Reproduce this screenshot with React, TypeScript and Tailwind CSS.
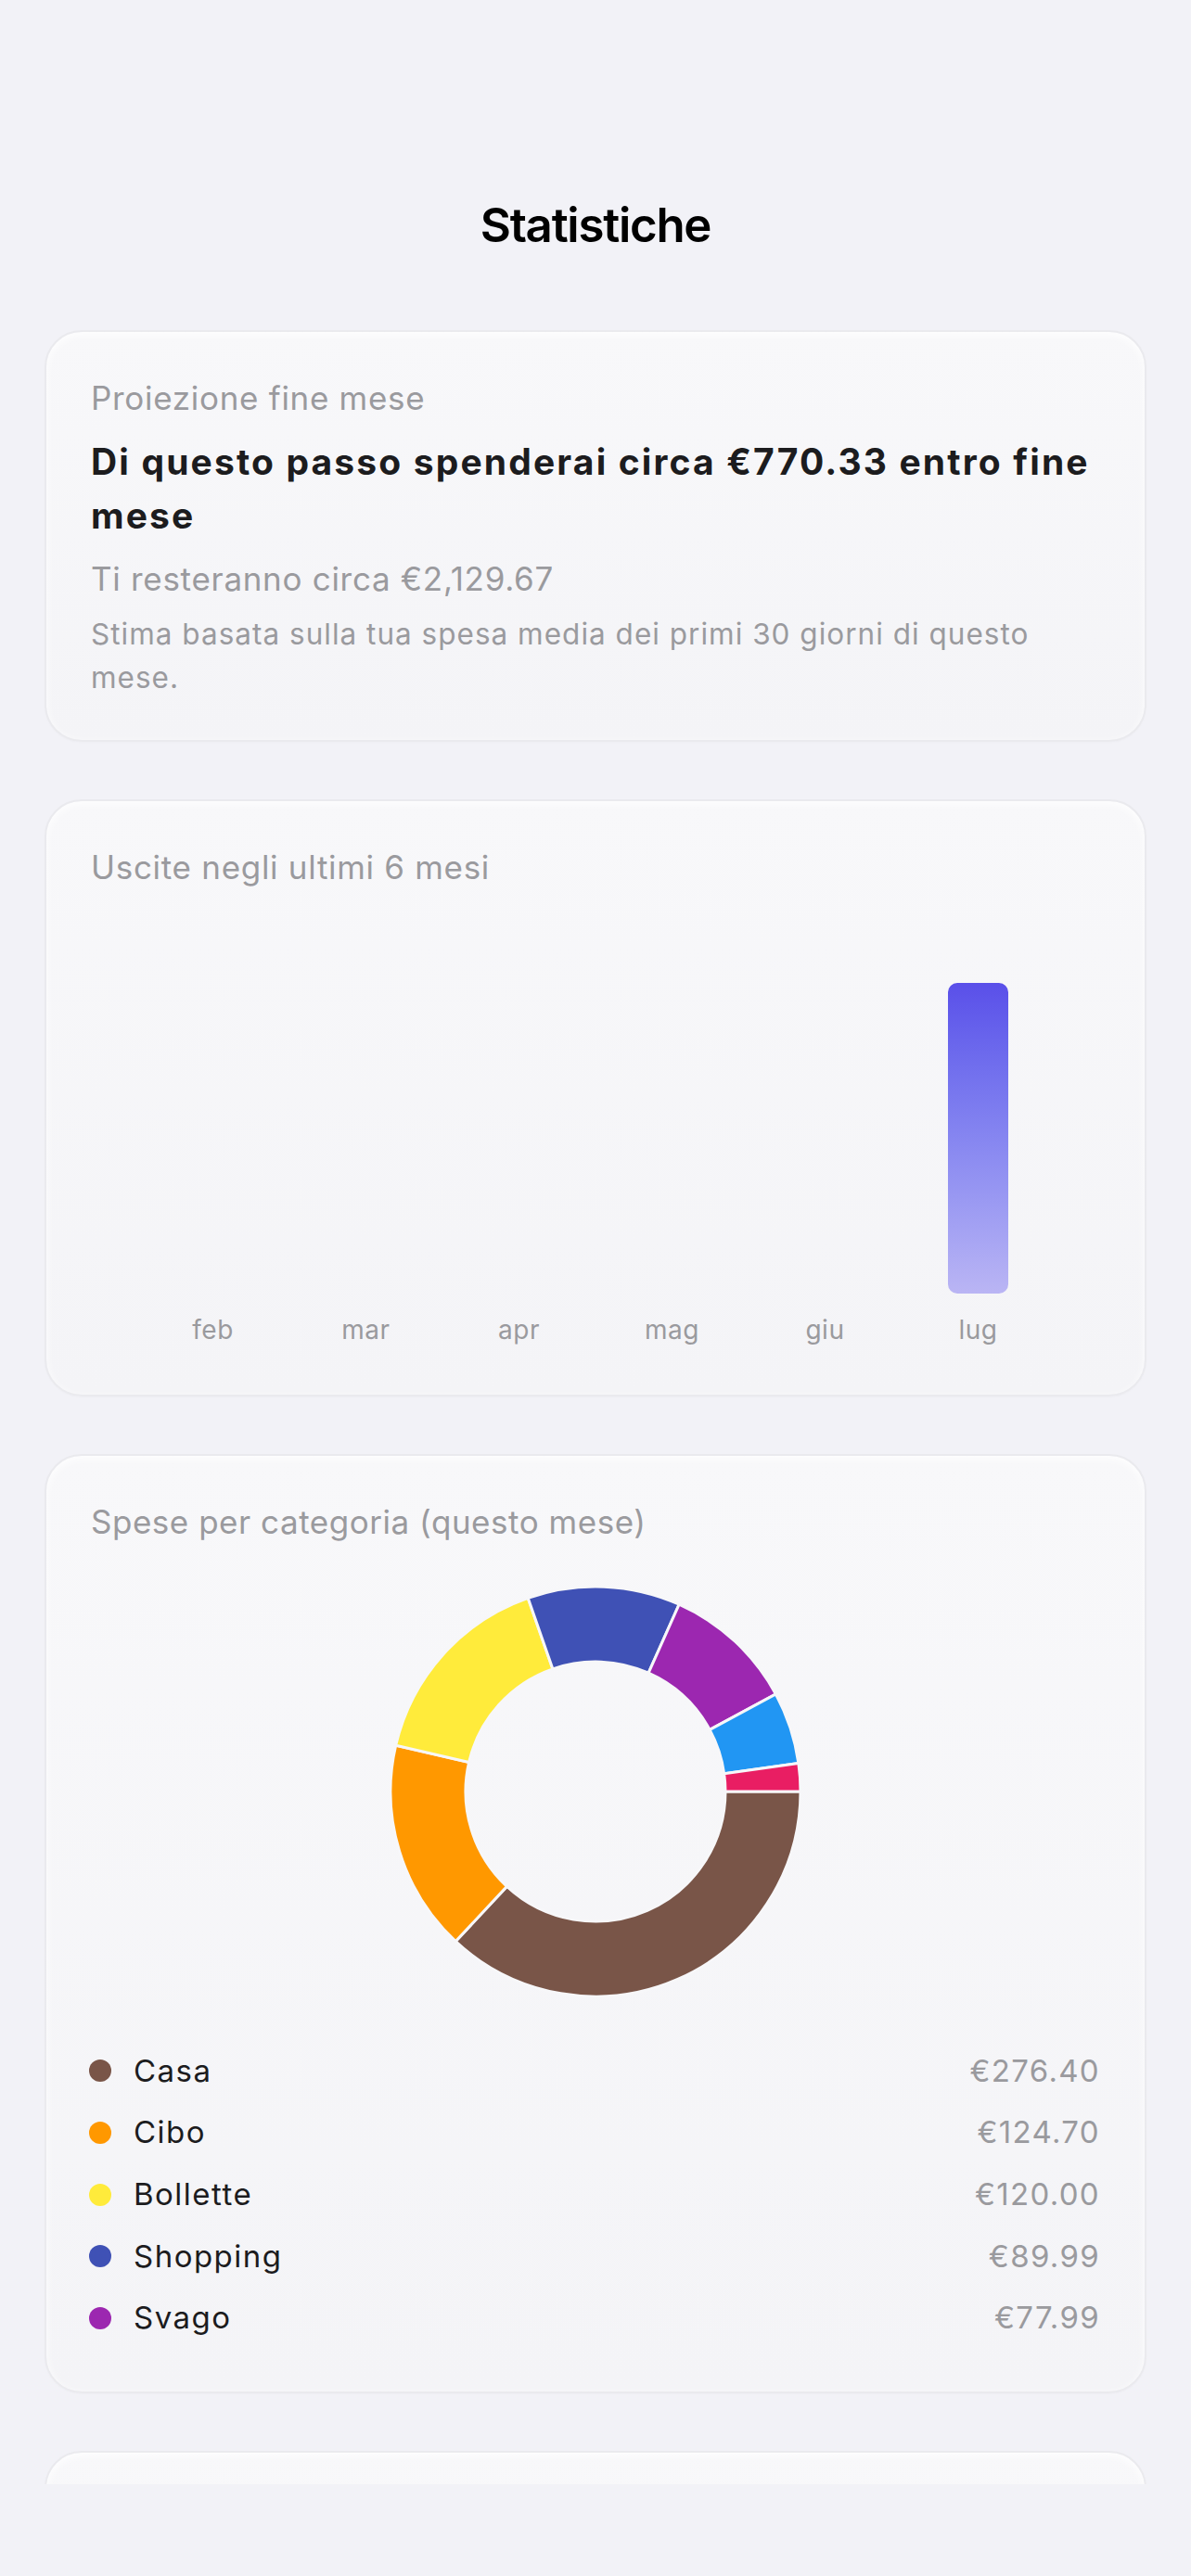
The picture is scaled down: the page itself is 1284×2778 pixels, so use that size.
import React from "react";

const segments = [
  { name: "Casa", value: 276.4, color: "#795548" },
  { name: "Cibo", value: 124.7, color: "#FF9800" },
  { name: "Bollette", value: 120.0, color: "#FFEB3B" },
  { name: "Shopping", value: 89.99, color: "#3F51B5" },
  { name: "Svago", value: 77.99, color: "#9C27B0" },
  { name: "Trasporti", value: 42.5, color: "#2196F3" },
  { name: "Salute", value: 16.5, color: "#E91E63" },
];

function arcPath(cx: number, cy: number, r0: number, r1: number, a0: number, a1: number) {
  const rad = (d: number) => (d * Math.PI) / 180;
  const p = (r: number, a: number) => [cx + r * Math.cos(rad(a)), cy + r * Math.sin(rad(a))];
  const large = a1 - a0 > 180 ? 1 : 0;
  const [x0, y0] = p(r1, a0);
  const [x1, y1] = p(r1, a1);
  const [x2, y2] = p(r0, a1);
  const [x3, y3] = p(r0, a0);
  return `M${x0} ${y0} A${r1} ${r1} 0 ${large} 1 ${x1} ${y1} L${x2} ${y2} A${r0} ${r0} 0 ${large} 0 ${x3} ${y3} Z`;
}

function Donut() {
  const total = segments.reduce((s, x) => s + x.value, 0);
  let acc = 0;
  return (
    <svg width="444" height="444" viewBox="0 0 444 444">
      {segments.map((s) => {
        const a0 = (acc / total) * 360;
        acc += s.value;
        const a1 = (acc / total) * 360;
        return (
          <path
            key={s.name}
            d={arcPath(222, 222, 140, 221, a0, a1)}
            fill={s.color}
            stroke="#f7f7f9"
            strokeWidth={3}
            strokeLinejoin="miter"
          />
        );
      })}
    </svg>
  );
}

function Card({ children, className = "" }: { children?: React.ReactNode; className?: string }) {
  return (
    <div
      className={
        "rounded-[40px] border-2 border-[#eaeaee] bg-gradient-to-b from-[#f8f8fa] to-[#f4f4f7] px-[48px] shadow-[inset_0_3px_10px_rgba(255,255,255,0.9),0_1px_2px_rgba(0,0,0,0.02)] " +
        className
      }
    >
      {children}
    </div>
  );
}

const months = ["feb", "mar", "apr", "mag", "giu", "lug"];

const legend = segments.slice(0, 5);

export default function App() {
  return (
    <div className="min-h-[2778px] bg-[#f2f2f7] font-['Inter','Noto_Sans',sans-serif] text-[#1c1c1e]">
      <div className="h-[2679px] overflow-hidden">
        <h1 className="pt-[212px] text-center text-[51px] font-semibold leading-[62px] tracking-[-0.025em] text-black">
          Statistiche
        </h1>

        <div className="mt-[82px] flex flex-col gap-[62px] px-[48px]">
          {/* Card 1 */}
          <Card className="pt-[50px] pb-[44px]">
            <div className="text-[35px] leading-[42px] tracking-[0.02em] text-[#9a9a9e]">Proiezione fine mese</div>
            <div className="mt-[19px] text-[39px] font-bold leading-[58px] tracking-[0.055em] text-[#1c1c1e]">
              Di questo passo spenderai circa €770.33 entro fine mese
            </div>
            <div className="mt-[18px] text-[35px] leading-[42px] tracking-[0.02em] text-[#9a9a9e]">
              Ti resteranno circa €2,129.67
            </div>
            <div className="mt-[15px] text-[31.5px] leading-[47px] tracking-[0.032em] text-[#9a9a9e]">
              Stima basata sulla tua spesa media dei primi 30 giorni di questo mese.
            </div>
          </Card>

          {/* Card 2 */}
          <Card className="pt-[50px] pb-[53px]">
            <div className="text-[35px] leading-[42px] tracking-[0.02em] text-[#9a9a9e]">Uscite negli ultimi 6 mesi</div>
            <div className="mt-[104px] grid h-[335px] grid-cols-6 px-[49px]">
              {months.map((m, i) => (
                <div key={m} className="flex items-end justify-center">
                  {i === 5 && (
                    <div className="h-full w-[65px] rounded-[10px] bg-gradient-to-b from-[#5a4fe9] to-[#bab5f4]" />
                  )}
                </div>
              ))}
            </div>
            <div className="mt-[22px] grid grid-cols-6 px-[49px]">
              {months.map((m) => (
                <div key={m} className="text-center text-[28px] leading-[34px] tracking-[0.02em] text-[#9a9a9e]">
                  {m}
                </div>
              ))}
            </div>
          </Card>

          {/* Card 3 */}
          <Card className="pt-[50px] pb-[46px]">
            <div className="text-[35px] leading-[42px] tracking-[0.015em] text-[#9a9a9e]">
              Spese per categoria (questo mese)
            </div>
            <div className="mt-[48px] flex justify-center">
              <Donut />
            </div>
            <div className="mt-[46px] flex flex-col">
              {legend.map((s) => (
                <div key={s.name} className="flex h-[66.7px] items-center">
                  <span className="ml-[-2px] h-[24px] w-[24px] rounded-full" style={{ backgroundColor: s.color }} />
                  <span className="ml-[24px] text-[33px] tracking-[0.045em] text-[#1c1c1e]">{s.name}</span>
                  <span className="ml-auto text-[33px] tracking-[0.04em] text-[#9a9a9e]">
                    €{s.value.toFixed(2)}
                  </span>
                </div>
              ))}
            </div>
          </Card>

          {/* Card 4 (partially visible) */}
          <Card className="h-[400px]" />
        </div>
      </div>
    </div>
  );
}
